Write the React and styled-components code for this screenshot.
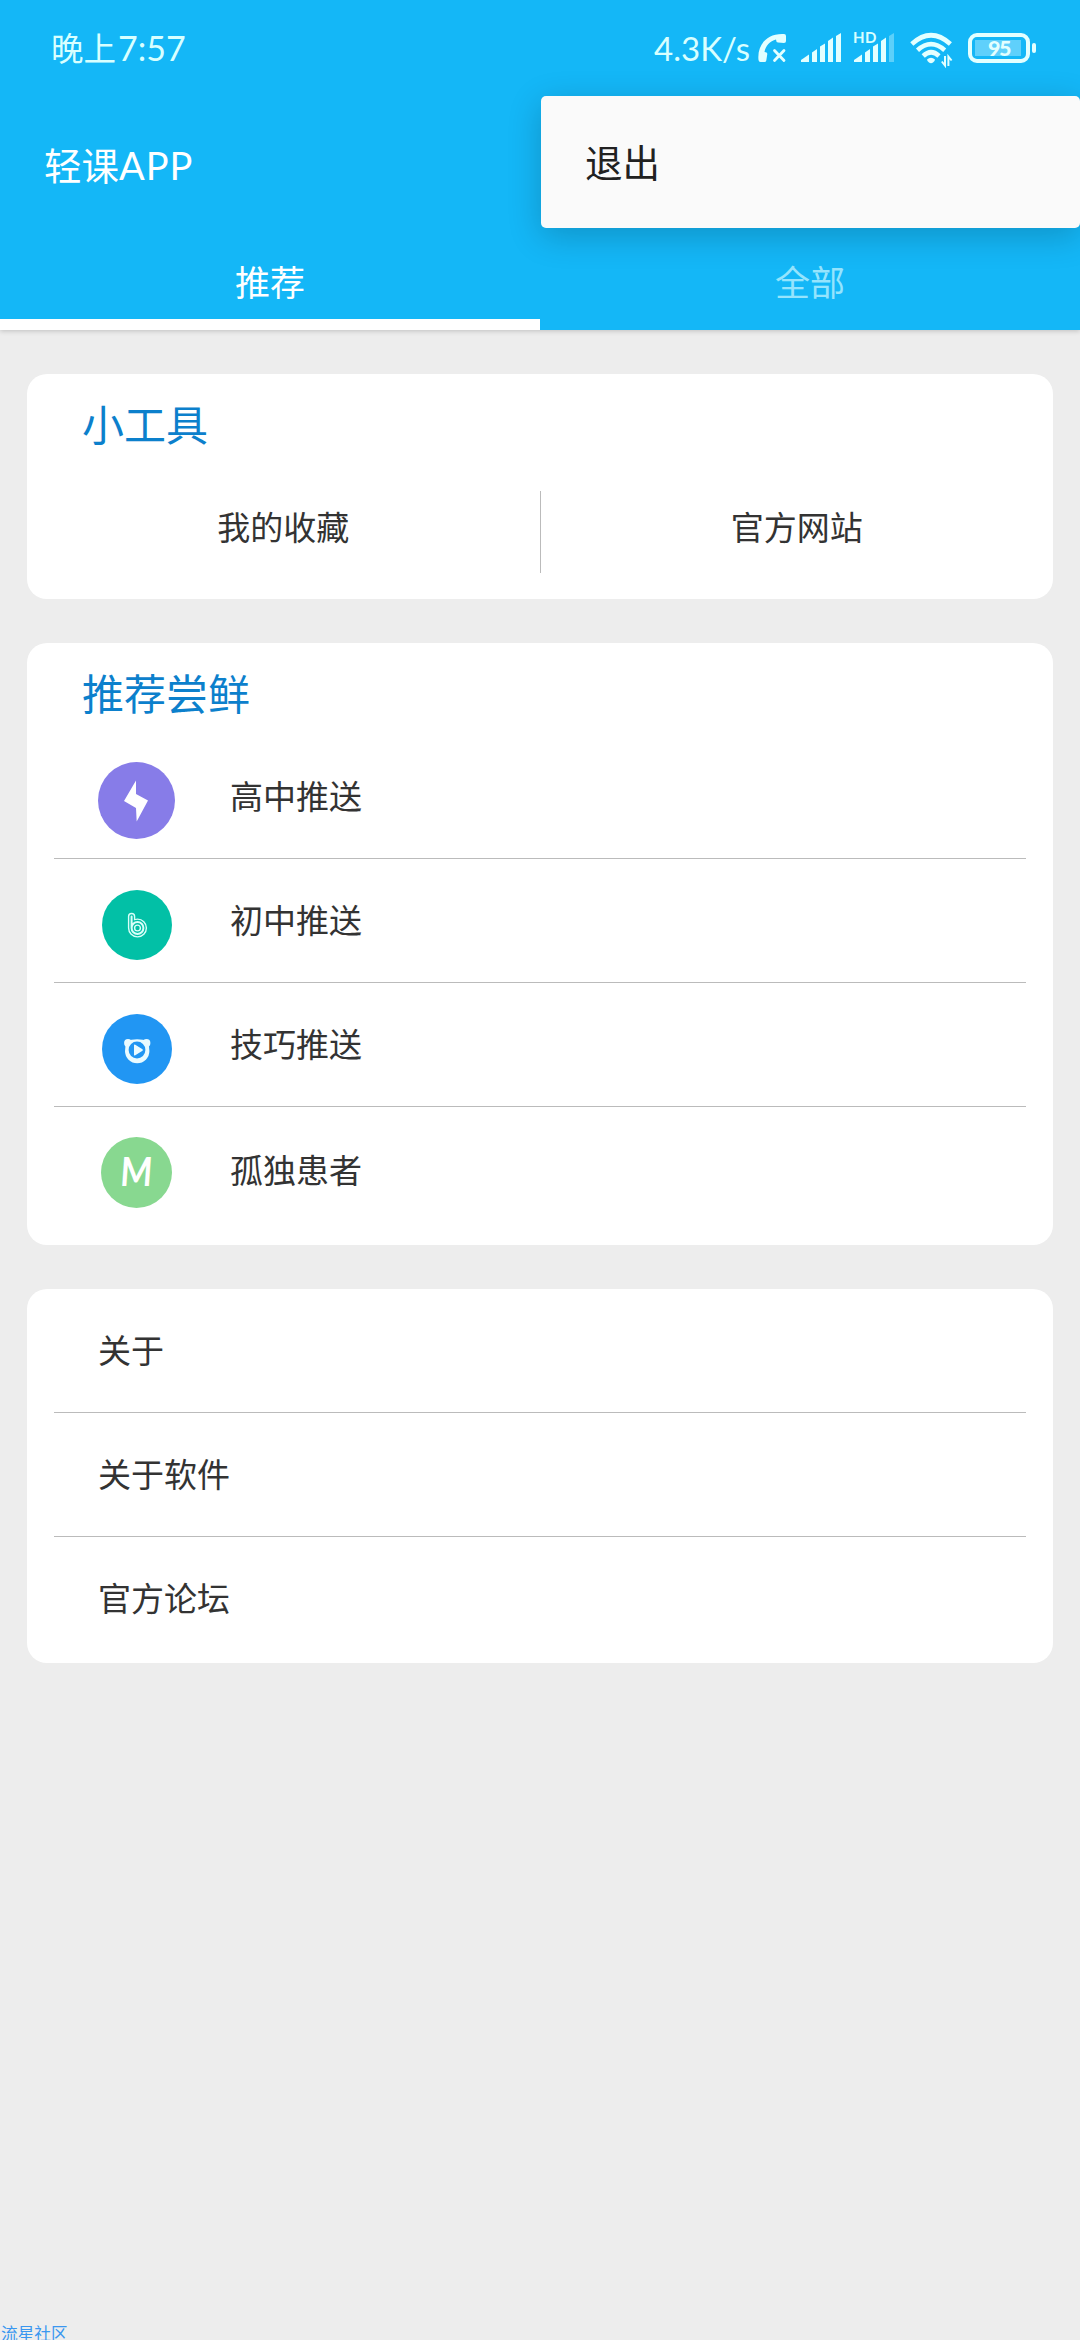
import React from 'react';
import styled, { createGlobalStyle } from 'styled-components';

const tools = ['我的收藏', '官方网站'];

const aboutLinks = ['关于', '关于软件', '官方论坛'];

const App = () => {
    return (
        <PageStyled>
            <GlobalStyle />
            <Header />
            <MainStyled>
                <Card>
                    <CardTitle>小工具</CardTitle>
                    <ToolRow>
                        {tools.map((tool) => <Tool key={tool}>{tool}</Tool>)}
                    </ToolRow>
                </Card>
                <Card $bottom={11}>
                    <CardTitle>推荐尝鲜</CardTitle>
                    <List>
                        {feeds.map(({ label, Icon, size }) => (
                            <FeedRow key={label}>
                                <IconSlot><Icon size={size} /></IconSlot>
                                <span>{label}</span>
                            </FeedRow>
                        ))}
                    </List>
                </Card>
                <Card $bottom={2}>
                    <List>
                        {aboutLinks.map((link) => <LinkRow key={link}>{link}</LinkRow>)}
                    </List>
                </Card>
            </MainStyled>
            <Watermark>流星社区</Watermark>
        </PageStyled>
    );
}

export default App;

const Header = () => {
    return (
        <HeaderStyled>
            <StatusBar />
            <AppBar>轻课<span>APP</span></AppBar>
            <Tabs>
                <Tab $active>推荐</Tab>
                <Tab>全部</Tab>
            </Tabs>
            <Menu>
                <MenuItem>退出</MenuItem>
            </Menu>
        </HeaderStyled>
    );
}

const StatusBar = () => {
    return (
        <StatusBarStyled>
            <Clock>晚上<span>7:57</span></Clock>
            <StatusIcons>
                <Speed>4.3K/s</Speed>
                <CallIcon />
                <SignalIcon />
                <HdSignal>
                    <HdLabel>HD</HdLabel>
                    <SignalIcon weak />
                </HdSignal>
                <WifiIcon />
                <Battery><span>95</span></Battery>
            </StatusIcons>
        </StatusBarStyled>
    );
}

// Status icons
const CallIcon = () => (
    <svg width="29" height="32" viewBox="0 0 29 32" fill="none">
        <path
            d="M0.5 28 C-1 14 8 1 26 2 Q28 2 28 4 L28 9 Q28 11 26 11 L20 10.5 Q18 10 18 7.5 C12 9 7.5 14 6.5 20 Q9.5 20 9.3 22 L8.3 28.5 Q8 30 6.5 30 L2.5 30 Q0.7 30 0.5 28 Z"
            fill="#e3ffff"
        />
        <path d="M16.5 18.5 L26 28.5 M26 18.5 L16.5 28.5" stroke="#e3ffff" strokeWidth="2.8" strokeLinecap="round" />
    </svg>
);

const SignalIcon = ({ weak }) => (
    <svg width="41" height="32" viewBox="0 0 41 32" fill="#e3ffff">
        <path d="M0 30 V28 L8 22.5 V30 Z" />
        <path d="M11 30 V20.5 L16 17 V30 Z" />
        <path d="M19 30 V14.5 L24 11.5 V30 Z" />
        <path d="M27 30 V9 L32 5.5 V30 Z" />
        <path d="M35 30 V4 L40 1 V30 Z" opacity={weak ? 0.35 : 1} />
    </svg>
);

const WifiIcon = () => (
    <svg width="43" height="36" viewBox="0 0 43 36" fill="none" stroke="#e3ffff" strokeWidth="4.6">
        <path d="M1.8 12 Q21 -5.5 40.4 12" />
        <path d="M7.5 18.2 Q21 6 34.7 18.2" />
        <path d="M13.2 24 Q21 16.5 29 24" />
        <path d="M17 27.5 Q21 24 25 27.5 Q25 29 23 30.5 Q21 32 19 30.5 Q17 29 17 27.5 Z" fill="#e3ffff" stroke="none" />
        <path d="M35 24 V33.5 L31.8 29.5 M38.4 34 V24.5 L41.6 28.5" strokeWidth="2" />
    </svg>
);

// Feed icons
const BoltIcon = ({ size }) => (
    <svg width={size} height={size} viewBox="0 0 77 77">
        <circle cx="38.5" cy="38.5" r="38.5" fill="#877ce8" />
        <path d="M38 18.5 V32 L50 38.5 L38.7 59.5 L38 46 L26 39 Z" fill="#fff" />
    </svg>
);

const loop = 'M29.6 26.5 V38 M29.6 38 a5.9 5.9 0 1 0 11.8 0 a5.9 5.9 0 1 0 -11.8 0';

const LoopIcon = ({ size }) => (
    <svg width={size} height={size} viewBox="0 0 70 70" fill="none">
        <circle cx="35" cy="35" r="35" fill="#02c0a6" />
        <g strokeLinecap="round">
            <path d={loop} stroke="#d9fff8" strokeWidth="7.4" />
            <path d={loop} stroke="#02c0a6" strokeWidth="4.6" />
            <path d={loop} stroke="#d9fff8" strokeWidth="2" />
        </g>
    </svg>
);

const BearIcon = ({ size }) => (
    <svg width={size} height={size} viewBox="0 0 70 70">
        <circle cx="35" cy="35" r="35" fill="#2196f3" />
        <g fill="#eafbff">
            <circle cx="26" cy="29" r="3.9" />
            <circle cx="44.5" cy="29" r="3.9" />
            <path d="M24 27 Q35 23.5 46.5 27 L47.4 37 A12.2 12.2 0 0 1 23 37 Z" />
        </g>
        <circle cx="35" cy="36" r="8.4" fill="#2196f3" />
        <path d="M32 31.3 Q32 30 33.3 30.8 L40.5 35.2 Q41.3 36 40.5 36.8 L33.3 41.2 Q32 42 32 40.7 Z" fill="#eafbff" />
    </svg>
);

const LetterIcon = ({ size }) => (
    <svg width={size} height={size} viewBox="0 0 71 71">
        <circle cx="35.5" cy="35.5" r="35.5" fill="#88d890" />
        <text
            x="38"
            y="49"
            textAnchor="middle"
            transform="skewX(-4)"
            fontFamily="Lato, sans-serif"
            fontWeight="700"
            fontSize="40"
            textLength="32"
            lengthAdjust="spacingAndGlyphs"
            fill="#fff"
        >
            M
        </text>
    </svg>
);

const feeds = [
    { label: '高中推送', Icon: BoltIcon, size: 77 },
    { label: '初中推送', Icon: LoopIcon, size: 70 },
    { label: '技巧推送', Icon: BearIcon, size: 70 },
    { label: '孤独患者', Icon: LetterIcon, size: 71 },
];

const GlobalStyle = createGlobalStyle`
    * {
        box-sizing: border-box;
    }

    body {
        margin: 0;
        background: #ededed;
        font-family: 'Noto Sans CJK SC', sans-serif;
    }

    svg {
        display: block;
    }
`;

const PageStyled = styled.div`
    position: relative;
    width: 1080px;
    height: 2340px;
    overflow: hidden;
    background: #ededed;
    color: #333;
`;

const HeaderStyled = styled.header`
    position: relative;
    height: 330px;
    background: #14b7f7;
    box-shadow: 0 1px 5px rgba(0, 0, 0, .2);
`;

const StatusBarStyled = styled.div`
    display: flex;
    justify-content: space-between;
    height: 96px;
    padding: 0px 44px 0px 51px;
    color: #d8ffff;
`;

const Clock = styled.div`
    font-size: 32.5px;
    line-height: 94px;

    span {
        margin-left: 2px;
        font-family: Lato, sans-serif;
        font-size: 34px;
    }
`;

const StatusIcons = styled.div`
    display: flex;
    align-items: flex-start;
    padding-top: 32px;
`;

const Speed = styled.span`
    margin-right: 8px;
    font-family: Lato, sans-serif;
    font-size: 33px;
    line-height: 33px;

    & + svg { margin-right: 14px; }
`;

const HdSignal = styled.div`
    position: relative;
    margin: 0px 15px 0px 12px;
`;

const HdLabel = styled.span`
    position: absolute;
    left: -1px;
    top: -4px;
    font-family: Lato, sans-serif;
    font-size: 15px;
    font-weight: 700;
    letter-spacing: .5px;
    line-height: 19px;
`;

const Battery = styled.div`
    position: relative;
    width: 62px;
    height: 30px;
    margin: 1px 6px 0px 15px;
    padding: 3px;
    border: 4px solid #e3ffff;
    border-radius: 9px;

    span {
        display: block;
        height: 16px;
        background: linear-gradient(to right, #5fd0fb 46px, transparent 46px);
        color: #e3ffff;
        font-family: Lato, sans-serif;
        font-size: 21.5px;
        font-weight: 900;
        letter-spacing: -1.5px;
        line-height: 16px;
        text-align: center;
    }

    &::after {
        content: '';
        position: absolute;
        right: -10px;
        top: 6px;
        width: 4px;
        height: 10px;
        border-radius: 2px;
        background: #e3ffff;
    }
`;

const AppBar = styled.div`
    height: 138px;
    padding-left: 44px;
    color: #fff;
    font-size: 37.5px;
    line-height: 136px;

    span {
        font-family: Lato, sans-serif;
        font-size: 38px;
        letter-spacing: 1px;
    }
`;

const Tabs = styled.nav`
    display: flex;
    height: 96px;
`;

const Tab = styled.div`
    flex: 1;
    border-bottom: solid 11px ${({ $active }) => ($active ? '#fff' : 'transparent')};
    color: ${({ $active }) => ($active ? '#fff' : '#95e4fd')};
    font-size: 35px;
    line-height: 94px;
    text-align: center;
`;

const Menu = styled.div`
    position: absolute;
    top: 96px;
    right: 0px;
    width: 539px;
    height: 132px;
    border-radius: 5px;
    background: #fafafa;
    box-shadow: 0 8px 34px rgba(0, 0, 0, .2);
`;

const MenuItem = styled.div`
    padding-left: 44px;
    color: #212121;
    font-size: 37.5px;
    line-height: 129px;
`;

const MainStyled = styled.main`
    display: flex;
    flex-direction: column;
    gap: 44px;
    padding: 44px 27px;
`;

const Card = styled.section`
    padding-bottom: ${({ $bottom }) => $bottom || 0}px;
    border-radius: 20px;
    background: #fff;
`;

const CardTitle = styled.h2`
    height: 92px;
    margin: 0;
    padding-left: 55px;
    color: #0c80cc;
    font-size: 42px;
    font-weight: 400;
    line-height: 98px;
`;

const ToolRow = styled.div`
    display: flex;
    height: 133px;
    padding: 25px 0px 26px;
`;

const Tool = styled.div`
    flex: 1;
    font-size: 33px;
    line-height: 71px;
    text-align: center;

    & + & {
        border-left: solid 1px #bbb;
    }
`;

const List = styled.div`
    padding: 0px 27px;
`;

const Row = styled.div`
    height: 124px;
    font-size: 33px;
    line-height: 121px;

    &:not(:last-child) {
        border-bottom: solid 1px #bbb;
    }
`;

const FeedRow = styled(Row)`
    display: flex;

    &:last-child {
        height: 127px;
        line-height: 125px;
    }
`;

const IconSlot = styled.div`
    display: flex;
    align-items: center;
    justify-content: center;
    width: 77px;
    height: 77px;
    margin: 27px 55px 0px 44px;
`;

const LinkRow = styled(Row)`
    padding-left: 44px;
`;

const Watermark = styled.div`
    position: absolute;
    left: 1px;
    bottom: -2px;
    color: #3a97f0;
    font-size: 16.7px;
    line-height: 18px;
`;
